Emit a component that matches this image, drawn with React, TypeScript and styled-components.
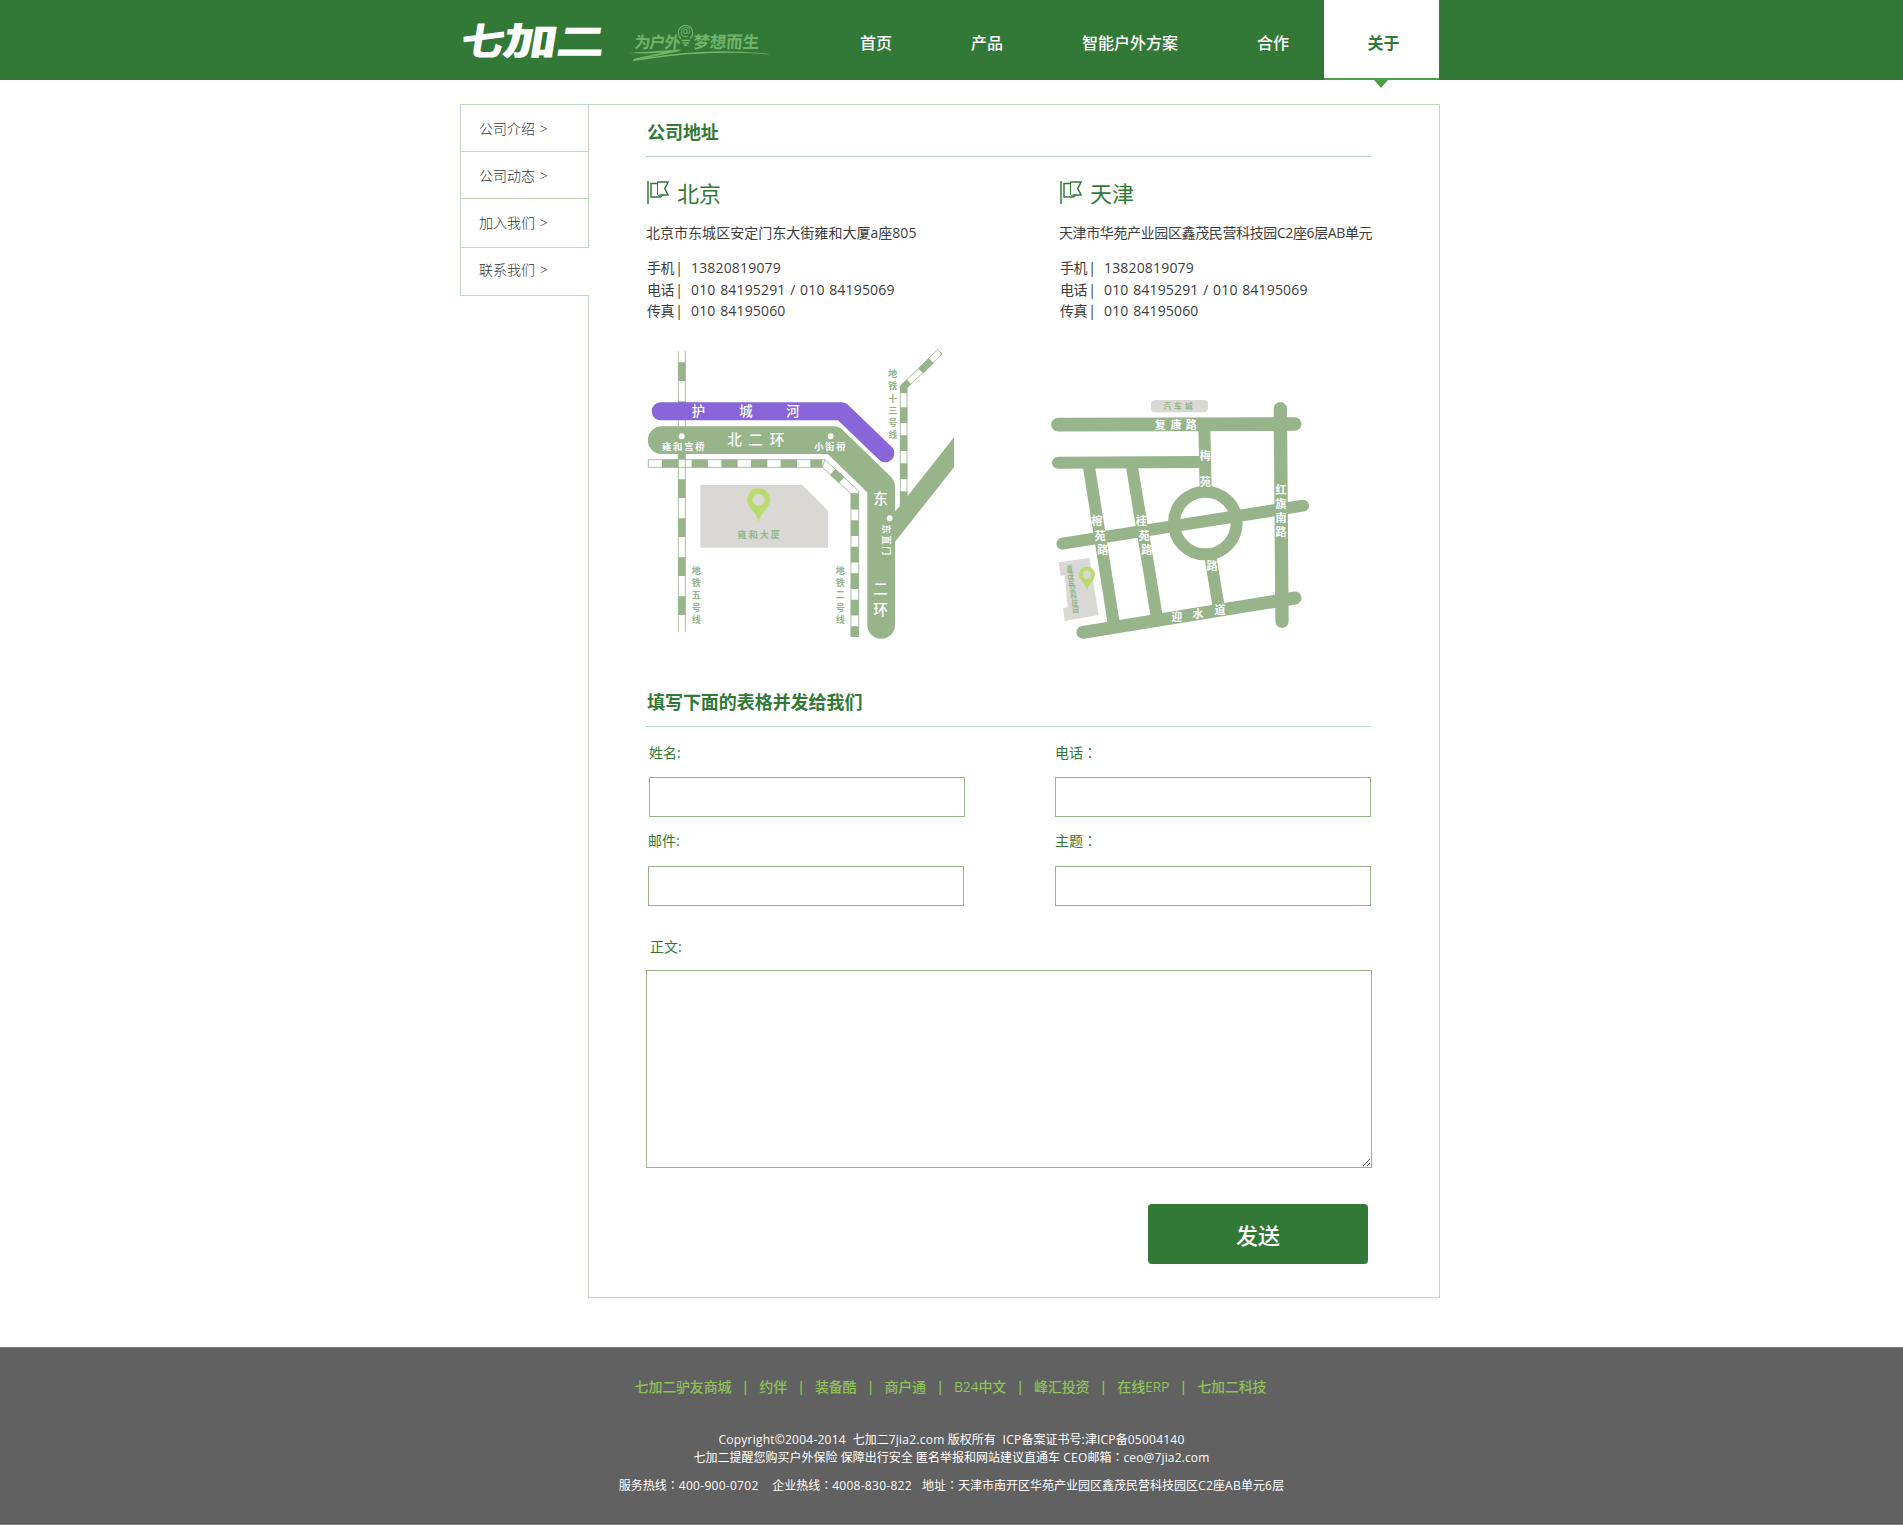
import React from "react";
import styled, { createGlobalStyle, css } from "styled-components";

const GREEN = "#327938";
const ROAD = "#97b48a";
const LINE = "#bfd6bf";
const FONT = `"Open Sans", "Noto Sans CJK SC", sans-serif`;

const Global = createGlobalStyle`
  * { box-sizing: border-box; }
  body { margin: 0; background: #fff; font-family: ${FONT}; color: #3c3c3c; }
  h2, h3, p, ul, dl, dd, dt { margin: 0; padding: 0; font-weight: 400; }
  a { color: inherit; text-decoration: none; }
`;

const Container = styled.div`
  width: 983px;
  margin: 0 auto;
  display: flex;
`;

/* ---------- header ---------- */
const Header = styled.header`
  height: 80px;
  background: ${GREEN};
`;
const Brand = styled.svg`
  display: block;
  width: 320px;
  height: 80px;
  flex: none;
  overflow: visible;
`;
const Nav = styled.nav`
  display: flex;
  gap: 79px;
  margin-left: 80px;
  font-size: 16px;
  line-height: 87px;
  font-weight: 500;
  color: #fff;
  white-space: nowrap;
`;
const NavLink = styled.a<{ $active?: boolean }>`
  height: 80px;
  ${(p) =>
    p.$active &&
    css`
      position: relative;
      width: 115px;
      margin-left: -44px;
      padding-left: 4px;
      background: #fff;
      border-bottom: 2px solid #4f9f48;
      color: ${GREEN};
      font-weight: 700;
      text-align: center;
      &::after {
        content: "";
        position: absolute;
        top: 80px;
        left: 50px;
        border: solid transparent;
        border-width: 8px 7.5px 0;
        border-top-color: #4f9f48;
      }
    `}
`;

/* ---------- body ---------- */
const Main = styled(Container)`
  margin-top: 24px;
  align-items: flex-start;
`;
const Side = styled.aside`
  width: 128px;
  flex: none;
`;
const SideItem = styled.a<{ $h?: number; $active?: boolean }>`
  display: block;
  height: ${(p) => p.$h ?? 47}px;
  padding: 1px 0 0 18px;
  border: solid ${LINE};
  border-width: 1px 0 0 1px;
  font-size: 14px;
  line-height: 46px;
  font-weight: 300;
  word-spacing: 1px;
  color: #333;
  white-space: pre;
  ${(p) =>
    p.$active &&
    css`
      position: relative;
      width: 129px;
      padding-top: 0;
      line-height: 44px;
      background: #fff;
      border-bottom-width: 1px;
    `}
`;
const Panel = styled.main`
  width: 852px;
  height: 1194px;
  padding: 0 0 0 57px;
  border: 1px solid ${LINE};
`;
const Heading = styled.h2<{ $top?: number }>`
  width: 725px;
  height: 52px;
  margin-top: ${(p) => p.$top ?? 0}px;
  padding: 2px 0 0 1px;
  border-bottom: 1px solid #bdd3c4;
  font-size: 18px;
  line-height: 50px;
  font-weight: 700;
  letter-spacing: -0.05px;
  color: ${GREEN};
`;
const Offices = styled.div`
  display: grid;
  grid-template-columns: 413px 1fr;
  padding-top: 15px;
`;
const City = styled.h3`
  display: flex;
  gap: 8px;
  padding-left: 1px;
  font-size: 22px;
  line-height: 43px;
  height: 44px;
  color: ${GREEN};
`;
const Flag = styled.svg`
  width: 22px;
  height: 23px;
  margin-top: 9px;
`;
const Address = styled.p<{ $ls?: number }>`
  margin-top: 6px;
  font-size: 14px;
  line-height: 22px;
  white-space: nowrap;
  letter-spacing: ${(p) => p.$ls ?? 0}px;
`;
const Contacts = styled.dl`
  margin-top: 13px;
  padding-left: 1px;
  font-size: 14px;
`;
const Contact = styled.div`
  display: flex;
  height: 21.66px;
  line-height: 21.66px;
`;
const ContactName = styled.dt`
  display: flex;
  width: 44px;
  letter-spacing: -0.4px;
`;
const Divider = styled.span`
  margin-left: 1px;
  font-weight: 500;
`;
const ContactValue = styled.dd`
  letter-spacing: 0.17px;
  word-spacing: 0.8px;
`;
const Maps = styled.div`
  display: flex;
  align-items: flex-start;
  height: 310px;
  margin: 18px 0 0 -6px;
`;
const MapSvg = styled.svg<{ $w: number; $h: number; $left?: number; $top?: number }>`
  flex: none;
  width: ${(p) => p.$w}px;
  height: ${(p) => p.$h}px;
  margin: ${(p) => p.$top ?? 0}px 0 0 ${(p) => p.$left ?? 0}px;
  font-family: ${FONT};
`;

/* ---------- form ---------- */
const Form = styled.form`
  width: 726px;
  padding-top: 16px;
  color: ${GREEN};
  font-size: 14px;
`;
const FieldRow = styled.div<{ $indent: number }>`
  display: flex;
  justify-content: space-between;
  padding: 0 1px 0 ${(p) => p.$indent}px;
  margin-bottom: 14px;
`;
const Field = styled.label<{ $gap?: number }>`
  display: flex;
  flex-direction: column;
  gap: ${(p) => p.$gap ?? 14}px;
  line-height: 20px;
`;
const FieldName = styled.span<{ $indent?: number }>`
  height: 20px;
  padding-left: ${(p) => p.$indent ?? 0}px;
`;
const Input = styled.input`
  display: block;
  width: 316px;
  height: 40px;
  border: 1px solid ${ROAD};
  border-radius: 0;
  outline: 0;
  background: #fff;
`;
const TextArea = styled.textarea`
  display: block;
  width: 726px;
  height: 198px;
  margin: 0;
  border: 1px solid ${ROAD};
  outline: 0;
  background: #fff;
`;
const Message = styled(Field)`
  margin-top: 31px;
`;
const Send = styled.button`
  display: block;
  width: 220px;
  height: 60px;
  margin: 36px 0 0 502px;
  padding: 2px 0 0;
  border: 0;
  border-radius: 4px;
  background: ${GREEN};
  color: #fff;
  font: 500 22px/58px ${FONT};
`;

/* ---------- footer ---------- */
const Footer = styled.footer`
  height: 178px;
  margin-top: 49px;
  border: solid #7c7c7c;
  border-width: 1px 0;
  background: #616161;
  color: #fff;
  font-size: 12px;
  line-height: 18px;
  font-weight: 500;
  text-align: center;
`;
const Links = styled.div`
  display: flex;
  justify-content: center;
  padding: 29px 2px 0 0;
  font-size: 14px;
  line-height: 20px;
  letter-spacing: -0.18px;
  color: #8fc158;
`;
const Bar = styled.span`
  width: 28px;
  font-weight: 600;
`;
const FootLine = styled.p<{ $top?: number }>`
  height: 18px;
  margin-top: ${(p) => p.$top ?? 0}px;
  white-space: pre;
`;
const Latin = styled.span<{ $ls: number }>`
  letter-spacing: ${(p) => p.$ls}px;
`;
/* full-width colon centred in its em box */
const Colon = styled.span`
  font-family: "Noto Sans CJK TC", sans-serif;
  line-height: 1;
`;

function Mixed({ text, ls }: { text: string; ls: number }) {
  return (
    <>
      {text.split(/([\x20-\x7e©]+|：)/).map((part, i) => {
        if (part === "：") return <Colon key={i} lang="zh-TW">：</Colon>;
        return i % 2 ? <Latin key={i} $ls={ls}>{part}</Latin> : part;
      })}
    </>
  );
}

function Label({ t, x, y, size, fill = "#fff", weight = 500 }: { t: string; x: number[]; y: number[]; size: number; fill?: string; weight?: number }) {
  return (
    <text x={x.join(" ")} y={y.map((v) => v + size * 0.37).join(" ")} fontSize={size} fontWeight={weight} fill={fill} textAnchor="middle">
      {t}
    </text>
  );
}
const rep = (v: number, n: number) => Array.from({ length: n }, () => v);

function Pin({ x, y, r }: { x: number; y: number; r: number }) {
  return (
    <g transform={`translate(${x} ${y}) scale(${r / 34})`}>
      <path d="M0 67C-5 38-34 25-34 0a34 34 0 1 1 68 0C34 25 5 38 0 67Z" fill="#b8db6c" />
      <circle r="18" fill="#d9d8d5" />
    </g>
  );
}

function FlagIcon() {
  return (
    <Flag viewBox="0 0 22 23" fill="none" stroke={GREEN}>
      <path d="M1 0v23" strokeWidth="1.500" />
      <path d="M10.500 2.500H4v13.500h9.500l2.500-2" strokeWidth="1.500" />
      <path d="M10.500 1h10.500l-3.200 6.500L21 14H12.500" strokeWidth="1.500" />
      <path d="M10.500 1v12.500l2.500 2" strokeWidth="1" />
    </Flag>
  );
}

function BeijingMap() {
  return (
    <MapSvg $w={330} $h={310} viewBox="0 0 990 930">
      <g fill="none" stroke={ROAD}>
        <path d="M115 33V875M136 33V875" strokeWidth="2.500" />
        <path d="M125.500 67V875" strokeWidth="22" strokeDasharray="56 61" />
        <path d="M25 359H555L656 453V891M25 382H547L633 461V891M25 358V383M547 382L555 359M633 461H656" strokeWidth="2.500" />
        <path d="M66 370.500H547" strokeWidth="24" strokeDasharray="49 40" />
        <path d="M578 396L605 420" strokeWidth="25" />
        <path d="M644.500 461V891" strokeWidth="24" strokeDasharray="47.500 32" />
        <path d="M781 500V138L893 29L906 42L801 144V500" strokeWidth="2.500" />
        <path d="M791 202V500" strokeWidth="22" strokeDasharray="47 37" />
        <path d="M842 93L874 62" strokeWidth="21" />
      </g>
      <path d="M780 160V138L800 118L813 132L802 144V160Z" fill={ROAD} />
      <path d="M62 214H605L736 340" fill="none" stroke="#8865d8" strokeWidth="54" strokeLinecap="round" strokeLinejoin="round" />
      <path d="M65 300.500H580L723.500 440V855" fill="none" stroke={ROAD} strokeWidth="83" strokeLinecap="round" strokeLinejoin="round" />
      <path d="M760 521L780 497L942 292V382L760 612Z" fill={ROAD} />
      <path d="M181 435H487L564 512V623H181Z" fill="#d9d8d5" />
      <Pin x={356} y={479} r={34} />
      <g fill="#fff">
        <circle cx="125" cy="289" r="9" />
        <circle cx="572" cy="289" r="9" />
        <circle cx="749" cy="535" r="9" />
      </g>
      <Label t="护城河" x={[175, 318, 459]} y={rep(214, 3)} size={40} />
      <Label t="北二环" x={[284, 347, 411]} y={rep(298, 3)} size={44} />
      <Label t="雍和宫桥" x={[80, 113, 147, 180]} y={rep(320, 4)} size={28} weight={600} />
      <Label t="小街桥" x={[537, 569, 603]} y={rep(320, 3)} size={28} weight={600} />
      <Label t="东" x={[722]} y={[477]} size={44} />
      <Label t="二环" x={[722, 722]} y={[746, 808]} size={44} />
      <g transform="translate(739 600) rotate(90)">
        <Label t="东直门" x={[-33, 0, 32]} y={rep(0, 3)} size={27} weight={600} />
      </g>
      <Label t="地铁十三号线" x={rep(758, 6)} y={[101, 138, 175, 212, 248, 285]} size={27} fill={ROAD} weight={600} />
      <Label t="地铁五号线" x={rep(169, 5)} y={[692, 729, 765, 802, 839]} size={27} fill={ROAD} weight={600} />
      <Label t="地铁二号线" x={rep(601, 5)} y={[692, 729, 765, 802, 839]} size={27} fill={ROAD} weight={600} />
      <Label t="雍和大厦" x={[306, 340, 373, 406]} y={rep(583, 4)} size={27} fill={ROAD} weight={600} />
    </MapSvg>
  );
}

function TianjinMap() {
  return (
    <MapSvg $w={290} $h={260} $left={70} $top={50} viewBox="0 0 870 780">
      <g fill="none" stroke={ROAD} strokeWidth="36">
        <g strokeLinecap="round">
          <path d="M54 104L764 102" strokeWidth="41" />
          <path d="M54 218L470 216" />
          <path d="M721 56L726 694" strokeWidth="40" />
          <path d="M67 461L789 347" />
          <path d="M129 727L765 624" strokeWidth="39" />
        </g>
        <path d="M460 216H497M493 110L497 300M511 500L536 650M275 225L352 690M146 225L222 705" />
        <circle cx="496" cy="399" r="94" />
      </g>
      <rect x="333" y="30" width="171" height="37" rx="12" fill="#d9d8d5" />
      <path d="M56 517L148 504L176 675L74 693L69 655L83 652L74 556L62 557Z" fill="#d9d8d5" />
      <Pin x={141} y={554} r={24} />
      <Label t="汽车城" x={[382, 414, 446]} y={rep(49, 3)} size={24} fill={ROAD} weight={600} />
      <Label t="复康路" x={[361, 408, 454]} y={rep(105, 3)} size={33} weight={600} />
      <Label t="梅苑" x={[496, 496]} y={[198, 275]} size={33} weight={600} />
      <Label t="路" x={[516]} y={[528]} size={33} weight={600} />
      <Label t="红旗南路" x={rep(723, 4)} y={[301, 343, 384, 425]} size={33} weight={600} />
      <Label t="榕苑路" x={[171, 180, 188]} y={[392, 437, 480]} size={33} weight={600} />
      <Label t="桂苑路" x={[304, 312, 320]} y={[392, 437, 480]} size={33} weight={600} />
      <Label t="迎水道" x={[410, 474, 540]} y={[681, 673, 660]} size={33} weight={600} />
      <Label t="鑫茂民营科技园" x={[89, 92, 95, 98, 101, 104, 107]} y={[537, 557, 577, 597, 618, 638, 658]} size={19} fill={ROAD} weight={700} />
    </MapSvg>
  );
}

function BrandArt() {
  return (
    <Brand viewBox="0 0 320 80" fontFamily={FONT}>
      <g fill="#fff" fontWeight="900" fontSize="38">
        <text transform="translate(-1 55) skewX(-9) scale(1.14 1)">七</text>
        <text transform="translate(41 55) skewX(-9) scale(1.45 1)">加</text>
        <text transform="translate(95 55) skewX(-9) scale(1.27 1)">二</text>
      </g>
      <g fill="#72b46a" fontWeight="700">
        <text transform="translate(174 47.500) skewX(-6)" fontSize="16" letterSpacing="-1">为户外</text>
        <text transform="translate(233 47.500) skewX(-4)" fontSize="16.500" letterSpacing="-.1">梦想而生</text>
        <text x="225.500" y="36" fontSize="12" fontWeight="500" textAnchor="middle">@</text>
      </g>
      <g fill="none" stroke="#72b46a">
        <path d="M221 38.500A7.300 7.300 0 1 1 230 38.500" strokeWidth="1.200" />
        <path d="M221.500 40.500H230M222.500 43H229M224 45.300H227.500" strokeWidth="1.500" />
      </g>
      <path d="M168 53Q190 51.500 218 49.500Q224 49.500 218 51.500L186 58Q245 48 300 53Q316 54.500 305 54.200Q245 49.500 174 61Q171 61 175 58.500L203 52.500Q185 54 168 53Z" fill="#72b46a" />
    </Brand>
  );
}

const offices = [
  { city: "北京", address: "北京市东城区安定门东大街雍和大厦a座805", ls: 0.03 },
  { city: "天津", address: "天津市华苑产业园区鑫茂民营科技园C2座6层AB单元", ls: -0.38 },
];
const contacts = [
  ["手机", "13820819079"],
  ["电话", "010 84195291 / 010 84195069"],
  ["传真", "010 84195060"],
];
const links = ["七加二驴友商城", "约伴", "装备酷", "商户通", "B24中文", "峰汇投资", "在线ERP", "七加二科技"];

export default function App() {
  return (
    <>
      <Global />
      <Header>
        <Container>
          <BrandArt />
          <Nav>
            <NavLink>首页</NavLink>
            <NavLink>产品</NavLink>
            <NavLink>智能户外方案</NavLink>
            <NavLink>合作</NavLink>
            <NavLink $active>关于</NavLink>
          </Nav>
        </Container>
      </Header>
      <Main>
        <Side>
          <SideItem>公司介绍 &gt;</SideItem>
          <SideItem>公司动态 &gt;</SideItem>
          <SideItem $h={49}>加入我们 &gt;</SideItem>
          <SideItem $h={49} $active>联系我们 &gt;</SideItem>
        </Side>
        <Panel>
          <Heading>公司地址</Heading>
          <Offices>
            {offices.map((o) => (
              <section key={o.city}>
                <City>
                  <FlagIcon />
                  {o.city}
                </City>
                <Address $ls={o.ls}>{o.address}</Address>
                <Contacts>
                  {contacts.map(([k, v]) => (
                    <Contact key={k}>
                      <ContactName>
                        {k}
                        <Divider>|</Divider>
                      </ContactName>
                      <ContactValue>{v}</ContactValue>
                    </Contact>
                  ))}
                </Contacts>
              </section>
            ))}
          </Offices>
          <Maps>
            <BeijingMap />
            <TianjinMap />
          </Maps>
          <Heading $top={25}>填写下面的表格并发给我们</Heading>
          <Form>
            <FieldRow $indent={3}>
              <Field>
                <FieldName>姓名:</FieldName>
                <Input />
              </Field>
              <Field>
                <FieldName>电话<Colon lang="zh-TW">：</Colon></FieldName>
                <Input />
              </Field>
            </FieldRow>
            <FieldRow $indent={2}>
              <Field $gap={15}>
                <FieldName>邮件:</FieldName>
                <Input />
              </Field>
              <Field $gap={15}>
                <FieldName>主题<Colon lang="zh-TW">：</Colon></FieldName>
                <Input />
              </Field>
            </FieldRow>
            <Message $gap={13}>
              <FieldName $indent={4}>正文:</FieldName>
              <TextArea />
            </Message>
            <Send type="button">发送</Send>
          </Form>
        </Panel>
      </Main>
      <Footer>
        <Links>
          {links.map((l, i) => (
            <React.Fragment key={l}>
              {i > 0 && <Bar>|</Bar>}
              <a>{l}</a>
            </React.Fragment>
          ))}
        </Links>
        <FootLine $top={34}>
          <Mixed ls={0.24} text="Copyright©2004-2014  七加二7jia2.com 版权所有  ICP备案证书号:津ICP备05004140" />
        </FootLine>
        <FootLine>
          <Mixed ls={0.15} text="七加二提醒您购买户外保险 保障出行安全 匿名举报和网站建议直通车 CEO邮箱：ceo@7jia2.com" />
        </FootLine>
        <FootLine $top={10}>
          <Mixed ls={0.28} text="服务热线：400-900-0702    企业热线：4008-830-822   地址：天津市南开区华苑产业园区鑫茂民营科技园区C2座AB单元6层" />
        </FootLine>
      </Footer>
    </>
  );
}
